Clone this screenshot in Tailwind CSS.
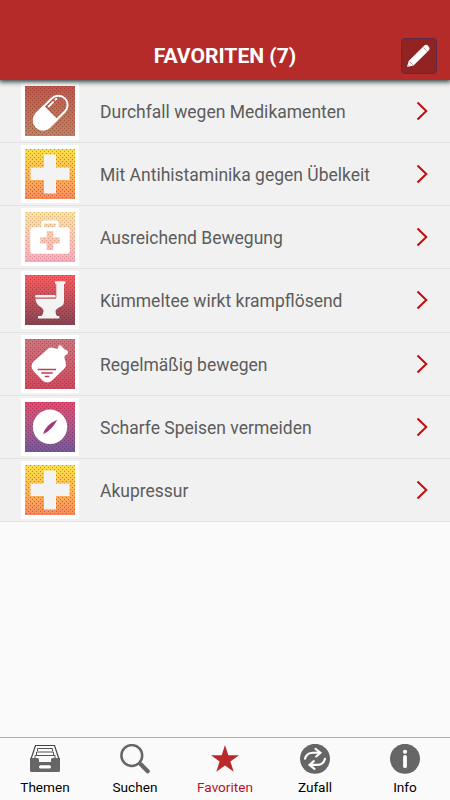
<!DOCTYPE html>
<html lang="de">
<head>
    <meta charset="UTF-8">
    <meta name="viewport" content="width=device-width, initial-scale=1.0">
    <title>Favoriten</title>
    <script src="https://cdn.jsdelivr.net/npm/@tailwindcss/browser@4"></script>
</head>
<body class="bg-[#fafafa] font-[Roboto,sans-serif]">
    <!-- Shared dot texture and icons -->
    <svg class="absolute size-0">
        <defs>
            <pattern id="dots" width="4" height="4" patternUnits="userSpaceOnUse">
                <circle cx="1.500" cy=".500" r=".7" fill="#501e28" fill-opacity=".42"/>
                <circle cx="3.500" cy="2.500" r=".7" fill="#501e28" fill-opacity=".42"/>
            </pattern>
            <symbol id="chevron" viewBox="0 0 12 20">
                <path d="M1.500 1.500 10.300 10l-8.800 8.500" fill="none" stroke="#c00d0d" stroke-width="2"/>
            </symbol>
            <symbol id="cross" viewBox="0 0 50 50">
                <path d="M19 5.500h12v13h13.500v12.500H31v13.500H19V31H5.500V18.500H19z" fill="#f3f3f3"/>
            </symbol>
        </defs>
    </svg>

    <div class="flex h-[800px] w-[450px] flex-col overflow-hidden">
        <!-- Header -->
        <header class="z-10 grid h-20 shrink-0 grid-cols-[1fr_auto_1fr] items-center bg-[#b52b2a] pt-[31px] shadow-[0_1px_5px_1px_#304040]">
            <h1 class="col-start-2 text-[21.100px] leading-6 font-bold text-white">FAVORITEN (7)</h1>
            <button class="mr-[13px] flex size-9 items-center justify-center justify-self-end rounded-[4px] border border-[#5c2a4b] bg-[#912322]">
                <svg class="size-[34px] shrink-0" viewBox="0 0 34 34">
                    <path d="M5 28l1.700-6L22.300 6.500q2-1.500 4 .4t.9 4.200L11.500 26.500z" fill="#fff"/>
                    <path d="M21.500 8.500l4.500 4.500M7.500 22.500l3.500 3.500" stroke="#b98582" stroke-width=".8"/>
                    <path d="M5 28l.8-2.500 1.700 1.700z" fill="#cfaaa8"/>
                </svg>
            </button>
        </header>

        <!-- Favourites -->
        <ul class="grid h-[442px] shrink-0 grid-rows-7 bg-[#f1f1f1] text-[17.5px] text-[#5c5c5c]">
            <li class="flex items-center border-b border-[#e3e3e3] pr-[22px] pl-[21px]">
                <div class="mr-[21px] border-4 border-white bg-linear-to-b from-[#c85644] to-[#c5845e]">
                    <svg class="size-[50px]" viewBox="0 0 50 50">
                        <rect width="50" height="50" fill="url(#dots)"/>
                        <g transform="rotate(45 25.700 26.500)">
                            <rect x="16.500" y="6.500" width="18.500" height="40" rx="9.250" fill="none" stroke="#fff" stroke-width="2"/>
                            <path d="M15.500 26.500H36v11a10.250 10.250 0 0 1-20.500 0z" fill="#fff"/>
                            <path d="M20 13v1M20 17.500v6" stroke="#fff" stroke-width="2" stroke-linecap="round"/>
                        </g>
                    </svg>
                </div>
                <span class="flex-1 pt-0.5">Durchfall wegen Medikamenten</span>
                <svg class="h-5 w-3"><use href="#chevron"/></svg>
            </li>
            <li class="flex items-center border-b border-[#e3e3e3] pr-[22px] pl-[21px]">
                <div class="mr-[21px] border-4 border-white bg-linear-to-b from-[#ffe544] to-[#fb8d5e]">
                    <svg class="size-[50px]" viewBox="0 0 50 50">
                        <rect width="50" height="50" fill="url(#dots)"/>
                        <use href="#cross"/>
                    </svg>
                </div>
                <span class="flex-1 pt-0.5">Mit Antihistaminika gegen Übelkeit</span>
                <svg class="h-5 w-3"><use href="#chevron"/></svg>
            </li>
            <li class="flex items-center border-b border-[#e3e3e3] pr-[22px] pl-[21px]">
                <div class="mr-[21px] border-4 border-white bg-linear-to-b from-[#ffe799] to-[#ffacc0]">
                    <svg class="size-[50px]" viewBox="0 0 50 50">
                        <rect width="50" height="50" fill="url(#dots)" opacity=".6"/>
                        <path d="M16.300 15.300v-4.300q0-2.500 2.500-2.500h12.400q2.500 0 2.500 2.500v4.300h8.500q2.500 0 2.500 2.500v21.400q0 2.500-2.500 2.500H7.800q-2.500 0-2.500-2.500V17.800q0-2.500 2.500-2.500zm3 0h11.400v-3.800H19.300zM21.700 19v6.200h-6.400v6.300h6.400V38h6.600v-6.500h6.400v-6.300h-6.400V19z" fill="#fff" fill-rule="evenodd"/>
                    </svg>
                </div>
                <span class="flex-1 pt-0.5">Ausreichend Bewegung</span>
                <svg class="h-5 w-3"><use href="#chevron"/></svg>
            </li>
            <li class="flex items-center border-b border-[#e3e3e3] pr-[22px] pl-[21px]">
                <div class="mr-[21px] border-4 border-white bg-linear-to-b from-[#ff5e60] to-[#884554]">
                    <svg class="size-[50px]" viewBox="0 0 50 50">
                        <rect width="50" height="50" fill="url(#dots)"/>
                        <path d="M30 6.300h10.300v2.600H39v17.600q0 4-4 5.500-4.500 2-4.500 4.500 0 2.500 1.500 4.500h2.300v2.500H13V41h3.500q2-2 2-5 0-2.500-3.500-4.500-4-2.300-4.600-7.800H30q1.300 0 1.300-1.500V8.900H30z" fill="#f3f3f3"/>
                        <rect x="10" y="20" width="20.700" height="2.500" rx="1.200" fill="#f3f3f3"/>
                    </svg>
                </div>
                <span class="flex-1 pt-0.5">Kümmeltee wirkt krampflösend</span>
                <svg class="h-5 w-3"><use href="#chevron"/></svg>
            </li>
            <li class="flex items-center border-b border-[#e3e3e3] pr-[22px] pl-[21px]">
                <div class="mr-[21px] border-4 border-white bg-linear-to-b from-[#cf7780] to-[#d04a5e]">
                    <svg class="size-[50px]" viewBox="0 0 50 50">
                        <rect width="50" height="50" fill="url(#dots)"/>
                        <path d="M24 9q2-1 5 0 2.500 1.500 4.200.2-.6-2.400 1.200-2.900 1.900-.4 3 1.600.9 1.700 2.600 2.600 2.600.5 3.200 2.500.2 2.300-2.500 3-1.700.8-1.200 3.200 1.500 4.300 1.500 7-.3 2-2 3.800L26.500 42q-4.500 3-9-.5l-9-9.500q-3.500-4.500-.5-9z" fill="#fff"/>
                        <path d="M12.700 30.500H31M16.300 34h11.400M19.700 37.500h4.600" stroke="#bd4050" stroke-width="1.300"/>
                    </svg>
                </div>
                <span class="flex-1 pt-0.5">Regelmäßig bewegen</span>
                <svg class="h-5 w-3"><use href="#chevron"/></svg>
            </li>
            <li class="flex items-center border-b border-[#e3e3e3] pr-[22px] pl-[21px]">
                <div class="mr-[21px] border-4 border-white bg-linear-to-b from-[#f54072] to-[#7058a8]">
                    <svg class="size-[50px]" viewBox="0 0 50 50">
                        <rect width="50" height="50" fill="url(#dots)"/>
                        <circle cx="25" cy="24.800" r="17.200" fill="#fff"/>
                        <path d="M18 32.200Q20.500 23 32.200 17.800 27.500 28 18 32.200z" fill="#a03a7c"/>
                    </svg>
                </div>
                <span class="flex-1 pt-0.5">Scharfe Speisen vermeiden</span>
                <svg class="h-5 w-3"><use href="#chevron"/></svg>
            </li>
            <li class="flex items-center border-b border-[#e3e3e3] pr-[22px] pl-[21px]">
                <div class="mr-[21px] border-4 border-white bg-linear-to-b from-[#ffe544] to-[#fb8d5e]">
                    <svg class="size-[50px]" viewBox="0 0 50 50">
                        <rect width="50" height="50" fill="url(#dots)"/>
                        <use href="#cross"/>
                    </svg>
                </div>
                <span class="flex-1 pt-0.5">Akupressur</span>
                <svg class="h-5 w-3"><use href="#chevron"/></svg>
            </li>
        </ul>

        <!-- Tab bar -->
        <nav class="mt-auto grid h-[63px] grid-cols-5 border-t border-[#b0b0b0] pt-1.5 text-[13.600px] leading-4 text-black">
            <a href="#" class="flex flex-col items-center gap-[5px]">
                <svg class="size-[30px]" viewBox="0 0 30 30">
                    <path d="M1 15 5.500 1.500h19L29 15" fill="none" stroke="#444" stroke-width="1.200"/>
                    <path d="M7.500 7V4.500h15V7M6.500 11V8h17v3M5 14.500v-3h20v3" fill="none" stroke="#555" stroke-width="1"/>
                    <path d="M0 14h7.500q1.500 0 1.500 1.500V18h12v-2.500q0-1.500 1.500-1.500H30v12.500q0 1.500-1.500 1.500h-27Q0 28 0 26.500z" fill="#666"/>
                    <rect x="9" y="21.300" width="12" height="3.200" rx="1.600" fill="#fff"/>
                </svg>
                <span>Themen</span>
            </a>
            <a href="#" class="flex flex-col items-center gap-[5px]">
                <svg class="size-[30px]" viewBox="0 0 30 30">
                    <circle cx="11.800" cy="11.500" r="10.400" fill="none" stroke="#666" stroke-width="2.500"/>
                    <path d="M19 19l2 2" stroke="#666" stroke-width="2.500"/>
                    <path d="M21 20.500l6.700 6.700" stroke="#666" stroke-width="4.200" stroke-linecap="round"/>
                </svg>
                <span>Suchen</span>
            </a>
            <a href="#" class="flex flex-col items-center gap-[5px] text-[#b9131b]">
                <svg class="size-[30px]" viewBox="0 0 30 30">
                    <path d="M15 1l3.300 10.200H29l-8.600 6.300 3.300 10.200L15 21.400l-8.700 6.300 3.300-10.200L1 11.200h10.700z" fill="#b92a2c"/>
                </svg>
                <span>Favoriten</span>
            </a>
            <a href="#" class="flex flex-col items-center gap-[5px]">
                <svg class="size-[30px]" viewBox="0 0 30 30">
                    <circle cx="15" cy="14.800" r="15" fill="#666"/>
                    <g fill="none" stroke="#fff" stroke-width="2.100" stroke-linecap="round">
                        <path id="arrow" d="M5 14.800Q6.500 8.700 13 8.700H20M15.500 4.800l5 3.900-4.300 3.800"/>
                        <use href="#arrow" transform="rotate(180 15 14.800)"/>
                    </g>
                </svg>
                <span>Zufall</span>
            </a>
            <a href="#" class="flex flex-col items-center gap-[5px]">
                <svg class="size-[30px]" viewBox="0 0 30 30">
                    <circle cx="15" cy="14.800" r="15" fill="#666"/>
                    <circle cx="15" cy="7.800" r="2.100" fill="#fff"/>
                    <path d="M15 13v9.200" stroke="#fff" stroke-width="3.800" stroke-linecap="round"/>
                </svg>
                <span>Info</span>
            </a>
        </nav>
    </div>
</body>
</html>
